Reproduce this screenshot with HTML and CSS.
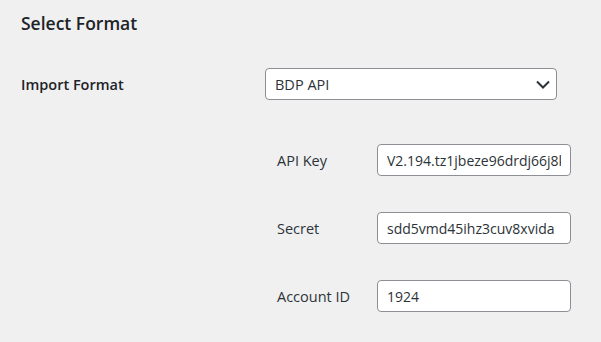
FILE: index.html
```html
<!DOCTYPE html>
<html lang="en">
  <head>
    <meta charset="UTF-8" />
    <meta name="viewport" content="width=device-width, initial-scale=1.0" />
    <title>Select Format</title>
    <link rel="stylesheet" href="styles.css">
  </head>
  <body>
    <div class="wrap">
      <h2 class="title">Select Format</h2>
      <div class="form-row">
        <label class="row-label" for="import-format">Import Format</label>
        <div class="select-box">
          <select id="import-format">
            <option>BDP API</option>
          </select>
          <svg class="chevron" viewBox="0 0 20 20">
            <path d="M5 7.5l6 6 6-6" fill="none" stroke="#2c3338" stroke-width="2"></path>
          </svg>
        </div>
      </div>
      <div class="sub-fields">
        <div class="field">
          <label class="field-label" for="api-key">API Key</label>
          <input id="api-key" type="text" value="V2.194.tz1jbeze96drdj66j8k2lq" />
        </div>
        <div class="field">
          <label class="field-label" for="secret">Secret</label>
          <input id="secret" type="text" value="sdd5vmd45ihz3cuv8xvida" />
        </div>
        <div class="field">
          <label class="field-label" for="account-id">Account ID</label>
          <input id="account-id" type="text" value="1924" />
        </div>
      </div>
    </div>
  </body>
</html>
```

FILE: styles.css
```css
body {
  margin: 0;
  background-color: #f0f0f1;
  color: #1d2327;
  font-family: "Open Sans", "Noto Sans", sans-serif;
}

.wrap {
  padding: 11px 0 0 21px;
}

.title {
  font-size: 17.5px;
  font-weight: 600;
  margin: 0 0 33px;
}

.form-row {
  display: flex;
  align-items: center;
}

.row-label {
  width: 244px;
  font-size: 14.5px;
  font-weight: 600;
}

.select-box {
  position: relative;
  width: 292px;
}

.select-box select {
  width: 100%;
  height: 32px;
  padding: 0 30px 0 9px;
  font-family: inherit;
  font-size: 14.5px;
  color: #2c3338;
  background: #fff;
  border: 1px solid #8c8f94;
  border-radius: 4px;
  appearance: none;
  -webkit-appearance: none;
}

.chevron {
  position: absolute;
  right: 5px;
  top: 6px;
  width: 20px;
  height: 20px;
  pointer-events: none;
}

.sub-fields {
  display: flex;
  flex-direction: column;
  gap: 36px;
  margin: 44px 0 0 256px;
}

.field {
  display: flex;
  align-items: center;
}

.field-label {
  width: 100px;
  font-size: 14.5px;
  color: #2c3338;
}

.field input {
  width: 194px;
  height: 32px;
  box-sizing: border-box;
  padding: 0 9px;
  font-family: inherit;
  font-size: 14px;
  color: #2c3338;
  background: #fff;
  border: 1px solid #8c8f94;
  border-radius: 4px;
}
```
